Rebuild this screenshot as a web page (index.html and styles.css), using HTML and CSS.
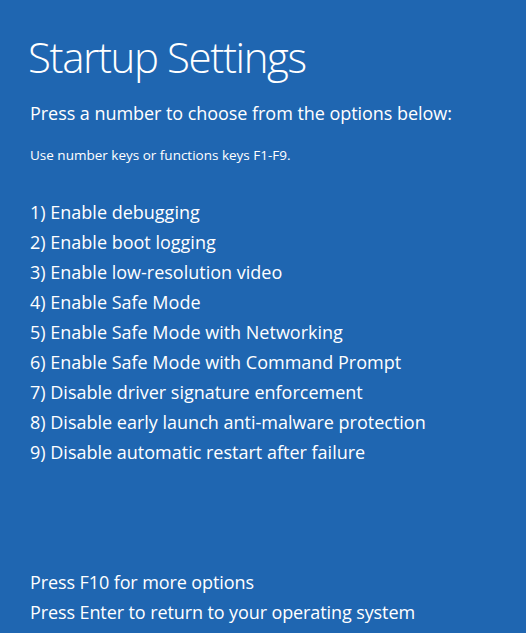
FILE: index.html
```html
<!DOCTYPE html>
<html lang="en">
<head>
<meta charset="utf-8">
<title>Startup Settings</title>
<link rel="stylesheet" href="styles.css">
</head>
<body>
<main class="screen">
  <h1 class="title">Startup Settings</h1>
  <p class="lead">Press a number to choose from the options below:</p>
  <p class="hint">Use number keys or functions keys F1-F9.</p>
  <ol class="options">
    <li>1) Enable debugging</li>
    <li>2) Enable boot logging</li>
    <li>3) Enable low-resolution video</li>
    <li>4) Enable Safe Mode</li>
    <li>5) Enable Safe Mode with Networking</li>
    <li>6) Enable Safe Mode with Command Prompt</li>
    <li>7) Disable driver signature enforcement</li>
    <li>8) Disable early launch anti-malware protection</li>
    <li>9) Disable automatic restart after failure</li>
  </ol>
  <div class="footer">
    <p>Press F10 for more options</p>
    <p>Press Enter to return to your operating system</p>
  </div>
</main>
</body>
</html>
```

FILE: styles.css
```css
html, body {
  margin: 0;
  padding: 0;
  background: #1f66b1;
  height: 100%;
  overflow: hidden;
}
.screen {
  color: #ffffff;
  font-family: "Open Sans", "Noto Sans", sans-serif;
  padding: 32px 0 0 30px;
}
.title {
  margin: 0 0 16px -2px;
  font-weight: 300;
  font-size: 42px;
  line-height: 50px;
  letter-spacing: -1.4px;
}
.lead {
  margin: 0 0 17px 0;
  font-size: 18px;
  line-height: 30px;
  letter-spacing: -0.05px;
}
.hint {
  margin: 0 0 32px 0;
  font-size: 13.5px;
  line-height: 20px;
}
.options {
  list-style: none;
  margin: 0 0 100px 0;
  padding: 0;
  font-size: 18px;
  line-height: 30px;
}
.footer p {
  margin: 0;
  font-size: 18px;
  line-height: 30px;
  letter-spacing: -0.1px;
}
```
